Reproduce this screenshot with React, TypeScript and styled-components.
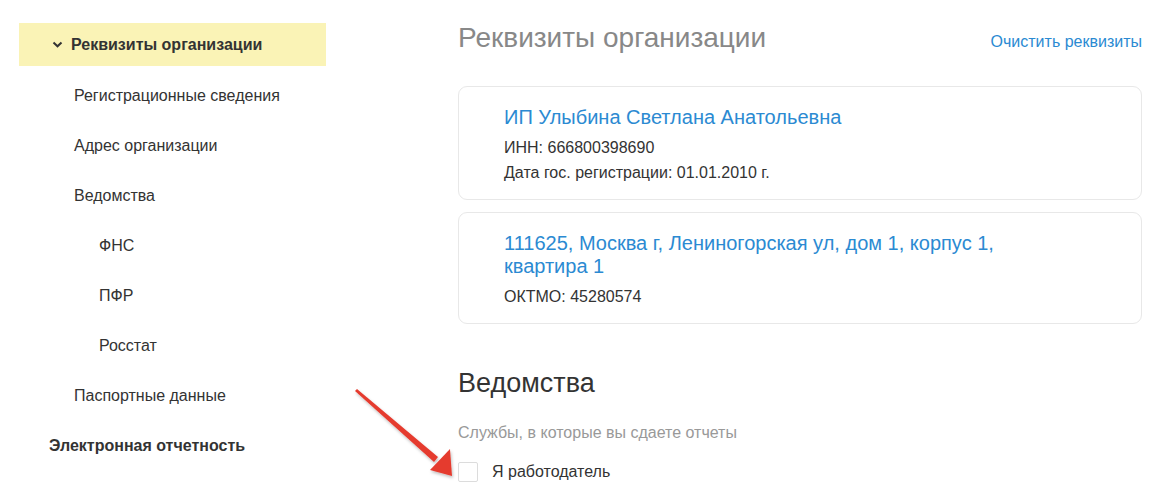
import React, { useState } from "react";
import styled, { createGlobalStyle } from "styled-components";

const GlobalStyle = createGlobalStyle`
  body {
    margin: 0;
    background: #fff;
    font-family: "Liberation Sans", Arial, sans-serif;
    color: #333;
  }
`;

const Page = styled.div`
  position: relative;
  display: grid;
  grid-template-columns: 307px 684px;
  column-gap: 132px;
  padding: 23px 0 0 19px;
  height: 464px;
  overflow: hidden;
`;

const Sidebar = styled.nav`
  display: flex;
  flex-direction: column;
`;

const ActiveItem = styled.div`
  display: flex;
  align-items: center;
  gap: 8px;
  height: 43px;
  padding-left: 33px;
  background: #faf3b6;
  font-size: 16px;
  font-weight: bold;
  color: #333;
`;

const NavList = styled.div`
  display: flex;
  flex-direction: column;
  margin-top: 5px;
`;

const NavItem = styled.div<{ $level: number; $bold?: boolean }>`
  display: flex;
  align-items: center;
  height: 50px;
  padding-left: ${(p) => 30 + p.$level * 25}px;
  font-size: 16px;
  font-weight: ${(p) => (p.$bold ? "bold" : "normal")};
  color: #333;
`;

const Main = styled.main`
  display: flex;
  flex-direction: column;
`;

const Header = styled.div`
  display: flex;
  justify-content: space-between;
  align-items: baseline;
  height: 32px;
  margin-top: -1px;
`;

const Title = styled.h1`
  margin: 0;
  font-size: 28px;
  font-weight: normal;
  line-height: 32px;
  color: #888;
`;

const Link = styled.a`
  font-size: 16px;
  color: #2b8ad2;
  text-decoration: none;
  cursor: pointer;
`;

const Cards = styled.div`
  display: flex;
  flex-direction: column;
  gap: 12px;
  margin-top: 32px;
`;

const Card = styled.div`
  border: 1px solid #e8e8e8;
  border-radius: 9px;
  padding: 19px 20px 14px 45px;
`;

const CardTitle = styled.div`
  max-width: 540px;
  font-size: 20px;
  line-height: 23px;
  color: #2b8ad2;
`;

const Meta = styled.div`
  display: flex;
  flex-direction: column;
  margin-top: 6px;
  font-size: 16px;
  line-height: 25px;
  color: #333;
`;

const SectionTitle = styled.h2`
  margin: 43px 0 0;
  font-size: 27px;
  font-weight: normal;
  line-height: 32px;
  color: #333;
`;

const Hint = styled.div`
  margin-top: 24px;
  font-size: 16px;
  line-height: 20px;
  color: #999;
`;

const CheckRow = styled.label`
  display: flex;
  align-items: center;
  gap: 14px;
  margin-top: 19px;
  font-size: 16px;
  color: #333;
  cursor: pointer;
`;

const Box = styled.span<{ $checked: boolean }>`
  width: 18px;
  height: 18px;
  border: 1px solid #dcdcdc;
  border-radius: 2px;
  background: ${(p) => (p.$checked ? "#2b8ad2" : "#fff")};
`;

const Arrow = styled.svg`
  position: absolute;
  left: 340px;
  top: 380px;
  pointer-events: none;
`;

const Chevron = () => (
  <svg width="11" height="7" viewBox="0 0 11 7">
    <path d="M1.5 1.5 L5.5 5.3 L9.5 1.5" fill="none" stroke="#333" strokeWidth="2" />
  </svg>
);

const nav = [
  { label: "Регистрационные сведения", level: 1 },
  { label: "Адрес организации", level: 1 },
  { label: "Ведомства", level: 1 },
  { label: "ФНС", level: 2 },
  { label: "ПФР", level: 2 },
  { label: "Росстат", level: 2 },
  { label: "Паспортные данные", level: 1 },
  { label: "Электронная отчетность", level: 0, bold: true },
];

export default function App() {
  const [employer, setEmployer] = useState(false);

  return (
    <>
      <GlobalStyle />
      <Page>
        <Sidebar>
          <ActiveItem>
            <Chevron />
            Реквизиты организации
          </ActiveItem>
          <NavList>
            {nav.map((n) => (
              <NavItem key={n.label} $level={n.level} $bold={n.bold}>
                {n.label}
              </NavItem>
            ))}
          </NavList>
        </Sidebar>

        <Main>
          <Header>
            <Title>Реквизиты организации</Title>
            <Link>Очистить реквизиты</Link>
          </Header>

          <Cards>
            <Card>
              <CardTitle>ИП Улыбина Светлана Анатольевна</CardTitle>
              <Meta>
                <span>ИНН: 666800398690</span>
                <span>Дата гос. регистрации: 01.01.2010 г.</span>
              </Meta>
            </Card>
            <Card>
              <CardTitle>
                111625, Москва г, Лениногорская ул, дом 1, корпус 1, квартира 1
              </CardTitle>
              <Meta>
                <span>ОКТМО: 45280574</span>
              </Meta>
            </Card>
          </Cards>

          <SectionTitle>Ведомства</SectionTitle>
          <Hint>Службы, в которые вы сдаете отчеты</Hint>
          <CheckRow onClick={() => setEmployer(!employer)}>
            <Box $checked={employer} />
            Я работодатель
          </CheckRow>
        </Main>

        <Arrow width="130" height="107" viewBox="0 0 130 107">
          <defs>
            <filter id="sh" x="-20%" y="-20%" width="140%" height="140%">
              <feDropShadow dx="1" dy="2" stdDeviation="1.5" floodColor="#000" floodOpacity="0.25" />
            </filter>
          </defs>
          <g filter="url(#sh)" fill="#e53b2f">
            <path d="M15 11 L17 9 L98 77 L94 82 Z" />
            <path d="M90 90 L110 69 L112 96 Z" />
          </g>
        </Arrow>
      </Page>
    </>
  );
}
